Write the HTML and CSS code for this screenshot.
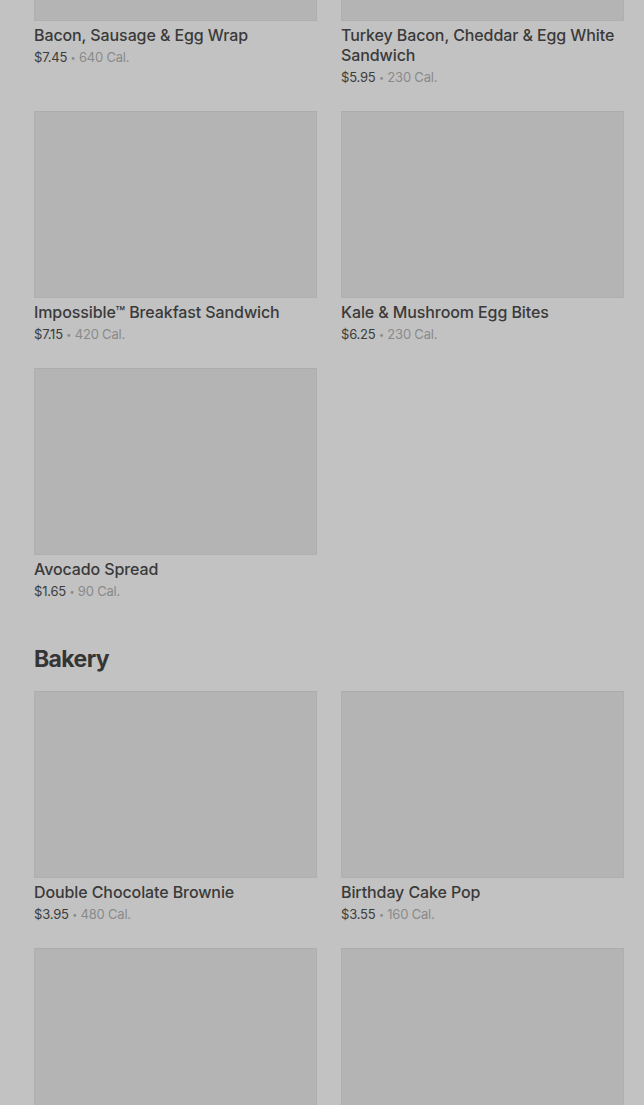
FILE: index.html
```html
<!DOCTYPE html>
<html lang="en">
<head>
<meta charset="utf-8">
<title>Menu</title>
<link rel="stylesheet" href="styles.css">
</head>
<body>
<main class="menu">
  <section class="section">
    <div class="grid">
      <article class="item">
        <div class="thumb"></div>
        <h3 class="name">Bacon, Sausage &amp; Egg Wrap</h3>
        <p class="meta"><span class="price">$7.45</span> <span class="dot">•</span> <span class="cal">640 Cal.</span></p>
      </article>
      <article class="item">
        <div class="thumb"></div>
        <h3 class="name">Turkey Bacon, Cheddar &amp; Egg White Sandwich</h3>
        <p class="meta"><span class="price">$5.95</span> <span class="dot">•</span> <span class="cal">230 Cal.</span></p>
      </article>
      <article class="item">
        <div class="thumb"></div>
        <h3 class="name">Impossible™ Breakfast Sandwich</h3>
        <p class="meta"><span class="price">$7.15</span> <span class="dot">•</span> <span class="cal">420 Cal.</span></p>
      </article>
      <article class="item">
        <div class="thumb"></div>
        <h3 class="name">Kale &amp; Mushroom Egg Bites</h3>
        <p class="meta"><span class="price">$6.25</span> <span class="dot">•</span> <span class="cal">230 Cal.</span></p>
      </article>
      <article class="item">
        <div class="thumb"></div>
        <h3 class="name">Avocado Spread</h3>
        <p class="meta"><span class="price">$1.65</span> <span class="dot">•</span> <span class="cal">90 Cal.</span></p>
      </article>
    </div>
  </section>
  <section class="section">
    <h2 class="section-title">Bakery</h2>
    <div class="grid">
      <article class="item">
        <div class="thumb"></div>
        <h3 class="name">Double Chocolate Brownie</h3>
        <p class="meta"><span class="price">$3.95</span> <span class="dot">•</span> <span class="cal">480 Cal.</span></p>
      </article>
      <article class="item">
        <div class="thumb"></div>
        <h3 class="name">Birthday Cake Pop</h3>
        <p class="meta"><span class="price">$3.55</span> <span class="dot">•</span> <span class="cal">160 Cal.</span></p>
      </article>
      <article class="item">
        <div class="thumb"></div>
        <h3 class="name">&nbsp;</h3>
      </article>
      <article class="item">
        <div class="thumb"></div>
        <h3 class="name">&nbsp;</h3>
      </article>
    </div>
  </section>
</main>
</body>
</html>
```

FILE: styles.css
```css
* { box-sizing: border-box; }
html, body {
  margin: 0;
  padding: 0;
  background: #c2c2c2;
  height: 1105px;
  overflow: hidden;
}
body {
  font-family: Inter, "Noto Sans", "Liberation Sans", sans-serif;
  color: #393939;
}
.menu {
  padding: 0 20px 0 34px;
  margin-top: -166px;
}
.grid {
  display: grid;
  grid-template-columns: 283px 283px;
  column-gap: 24px;
  row-gap: 24px;
}
.item { min-width: 0; }
.thumb {
  height: 187px;
  background: #b4b4b4;
  border: 1px solid #afafaf;
  border-top-color: #adadad;
}
.name {
  margin: 4px 0 0;
  font-size: 16px;
  line-height: 20px;
  font-weight: 500;
  letter-spacing: -0.1px;
  color: #3a3a3a;
}
.meta {
  margin: 3px 0 0;
  font-size: 13px;
  line-height: 18px;
  letter-spacing: -0.2px;
}
.price { color: #3c3c3c; }
.dot { color: #8a8a8a; font-size: 9px; vertical-align: 1px; }
.cal { color: #8a8a8a; }
.section-title {
  margin: 44px 0 18px;
  font-size: 23px;
  line-height: 28px;
  font-weight: 700;
  letter-spacing: -0.6px;
  color: #353535;
}
```
